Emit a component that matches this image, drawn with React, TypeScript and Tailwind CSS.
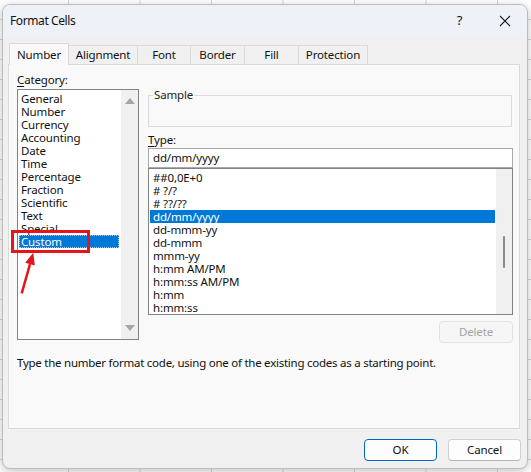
import React from "react";

const cats = ["General","Number","Currency","Accounting","Date","Time","Percentage","Fraction","Scientific","Text","Special","Custom"];
const types = ["##0,0E+0","# ?/?","# ??/??","dd/mm/yyyy","dd-mmm-yy","dd-mmm","mmm-yy","h:mm AM/PM","h:mm:ss AM/PM","h:mm","h:mm:ss"];
const tabs = [
  { label: "Alignment", w: "w-[70px]" },
  { label: "Font", w: "w-[54px]" },
  { label: "Border", w: "w-[55px]" },
  { label: "Fill", w: "w-[55px]" },
  { label: "Protection", w: "w-[70px]" },
];

export default function App() {
  return (
    <div className="w-[531px] h-[472px] overflow-hidden bg-white bg-[image:linear-gradient(to_right,#d6d6d6_1px,transparent_1px),linear-gradient(to_bottom,#d6d6d6_1px,transparent_1px)] bg-[size:71.5px_20px] bg-[position:68px_19px] pt-[4px] pl-[2px] font-['Noto_Sans',sans-serif] text-[11.5px] tracking-[-0.15px] text-[#111]">
      <div className="w-[526px] h-[465px] rounded-[8px] border border-[#bdbdbd] bg-[#f0f0f0] shadow-[0_2px_8px_rgba(0,0,0,0.25)] flex flex-col overflow-hidden">
        {/* Title bar */}
        <div className="h-[32px] shrink-0 bg-[#eef2f8] flex items-center pl-[7px]">
          <span className="text-[12px] tracking-[-0.4px]">Format Cells</span>
          <div className="ml-auto flex h-full">
            <div className="w-[45px] h-full flex items-center justify-center text-[13px]">?</div>
            <div className="w-[45px] h-full flex items-center justify-center">
              <svg width="12" height="12" viewBox="0 0 12 12">
                <path d="M1 1 L11 11 M11 1 L1 11" stroke="#222" strokeWidth="1.1" />
              </svg>
            </div>
          </div>
        </div>

        <div className="flex-1 flex flex-col pl-[5px] pr-[7px]">
          {/* Tabs */}
          <div className="flex items-end h-[27px] pt-[6px] relative z-10 pl-[1px]">
            <div className="w-[60px] h-[22px] -mb-px bg-[#f9f9f9] border border-b-0 border-[#d9d9d9] flex items-center justify-center">
              Number
            </div>
            {tabs.map((t) => (
              <div
                key={t.label}
                className={`${t.w} h-[19px] -ml-px bg-[#f0f0f0] border border-b-0 border-[#dadada] flex items-center justify-center`}
              >
                {t.label}
              </div>
            ))}
          </div>

          {/* Panel */}
          <div className="relative h-[365px] border border-[#d9d9d9] bg-[#f9f9f9] pl-[8px] pr-[6px] pt-[8px]">
            <div className="flex">
              {/* Left column */}
              <div className="w-[122px] flex flex-col">
                <div className="h-[14px] leading-[14px]">
                  <span className="underline underline-offset-[2px]">C</span>ategory:
                </div>
                <div className="mt-[2px] h-[251px] border border-[#828282] bg-white flex">
                  <div className="flex-1 pt-[2px]">
                    {cats.map((c) => (
                      <div
                        key={c}
                        className={
                          c === "Custom"
                            ? "h-[13px] leading-[13px] ml-[1px] mr-[2px] pl-[2px] bg-[#0078d7] text-white outline-dotted outline-1 -outline-offset-1 outline-[#9ccaf0]"
                            : "h-[13px] leading-[13px] ml-[1px] mr-[2px] pl-[2px]"
                        }
                      >
                        {c}
                      </div>
                    ))}
                  </div>
                  <div className="w-[17px] bg-[#f0f0f0] flex flex-col items-center justify-between pt-[8px] pb-[8px]">
                    <div className="w-0 h-0 border-l-[5px] border-r-[5px] border-b-[6px] border-l-transparent border-r-transparent border-b-[#a6a6a6]" />
                    <div className="w-0 h-0 border-l-[5px] border-r-[5px] border-t-[6px] border-l-transparent border-r-transparent border-t-[#a6a6a6]" />
                  </div>
                </div>
              </div>

              {/* Right column */}
              <div className="ml-[9px] w-[365px] flex flex-col">
                <fieldset className="mt-[16px] h-[38px] border border-[#dcdcdc] pl-[4px] pr-[4px] w-[364px]">
                  <legend className="px-[1px] leading-[12px] text-[#222]">Sample</legend>
                </fieldset>
                <div className="mt-[6px] h-[14px] leading-[14px]">
                  <span className="underline underline-offset-[2px]">T</span>ype:
                </div>
                <div className="mt-[1px] h-[20px] border border-[#a9a9a9] bg-white pl-[4px] flex items-center">
                  dd/mm/yyyy
                </div>
                <div className="h-[147px] border border-[#828282] bg-white flex">
                  <div className="flex-1 pt-[2px]">
                    {types.map((t) => (
                      <div
                        key={t}
                        className={
                          t === "dd/mm/yyyy"
                            ? "h-[13px] leading-[13px] mx-[1px] pl-[3px] bg-[#0078d7] text-white"
                            : "h-[13px] leading-[13px] mx-[1px] pl-[3px]"
                        }
                      >
                        {t}
                      </div>
                    ))}
                  </div>
                  <div className="w-[16px] bg-[#f0f0f0] flex flex-col items-center pt-[67px]">
                    <div className="w-[2px] h-[32px] rounded-full bg-[#8a8a8a]" />
                  </div>
                </div>
                <div className="mt-[6px] flex justify-end">
                  <div className="w-[74px] h-[22px] rounded-[4px] border border-[#e3e3e3] bg-[#f6f6f6] text-[#a3a3a3] flex items-center justify-center">
                    Delete
                  </div>
                </div>
              </div>
            </div>

            <div className="mt-[13px] h-[14px] leading-[14px] tracking-[-0.25px]">
              Type the number format code, using one of the existing codes as a starting point.
            </div>

            {/* Red annotation */}
            <div className="absolute left-[2px] top-[165px] w-[79px] h-[23px] border-[3px] border-[#e3151b]" />
            <svg className="absolute left-0 top-[180px]" width="40" height="60" viewBox="0 0 40 60">
              <line x1="12.7" y1="48.3" x2="21" y2="19.2" stroke="#e3151b" strokeWidth="2.5" />
              <polygon points="24.3,7.7 25.8,20.6 16.2,17.8" fill="#e3151b" />
            </svg>
          </div>

          {/* Buttons */}
          <div className="mt-[10px] flex justify-end gap-[11px] -mr-[1px]">
            <div className="w-[73px] h-[22px] rounded-[4px] border border-[#0067c0] bg-[#fdfdfd] flex items-center justify-center">
              OK
            </div>
            <div className="w-[73px] h-[22px] rounded-[4px] border border-[#d0d0d0] border-b-[#b5b5b5] bg-[#fdfdfd] flex items-center justify-center">
              Cancel
            </div>
          </div>
        </div>
      </div>
    </div>
  );
}
